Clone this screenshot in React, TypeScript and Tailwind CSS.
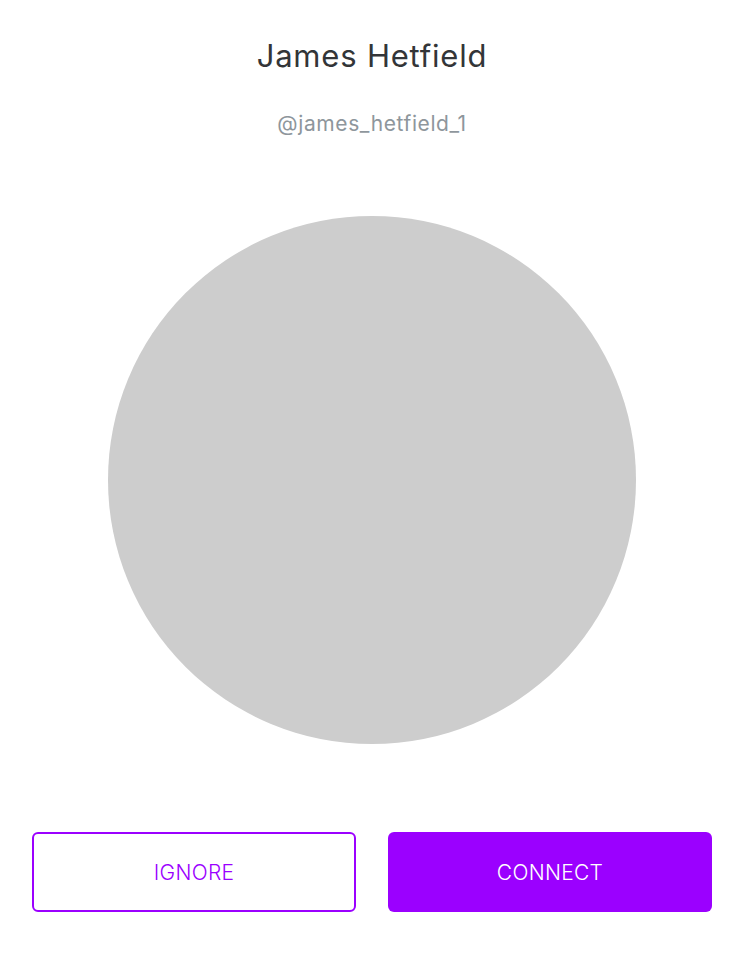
export default function App() {
  return (
    <div className="w-[744px] h-[960px] bg-white flex flex-col items-center" style={{ fontFamily: "Inter, 'Noto Sans', sans-serif" }}>
      <h1 className="mt-[36px] text-[31px] leading-[40px] tracking-[0.8px] text-[#333538] font-normal">James Hetfield</h1>
      <p className="mt-[36px] text-[21px] leading-[24px] tracking-[0.6px] text-[#8e969c]">@james_hetfield_1</p>
      <div className="mt-[80px] w-[528px] h-[528px] rounded-full bg-[#cdcdcd] shrink-0" />
      <div className="mt-[88px] w-full px-[32px] grid grid-cols-[324px_324px] justify-between">
        <button className="h-[80px] rounded-[6px] border-2 border-[#9b00ff] text-[#9b00ff] text-[21px] leading-[26px] pt-[1px] tracking-[0.3px] font-light">IGNORE</button>
        <button className="h-[80px] rounded-[6px] bg-[#9b00ff] text-white text-[21px] leading-[26px] pt-[1px] tracking-[0.3px] font-light">CONNECT</button>
      </div>
    </div>
  );
}
